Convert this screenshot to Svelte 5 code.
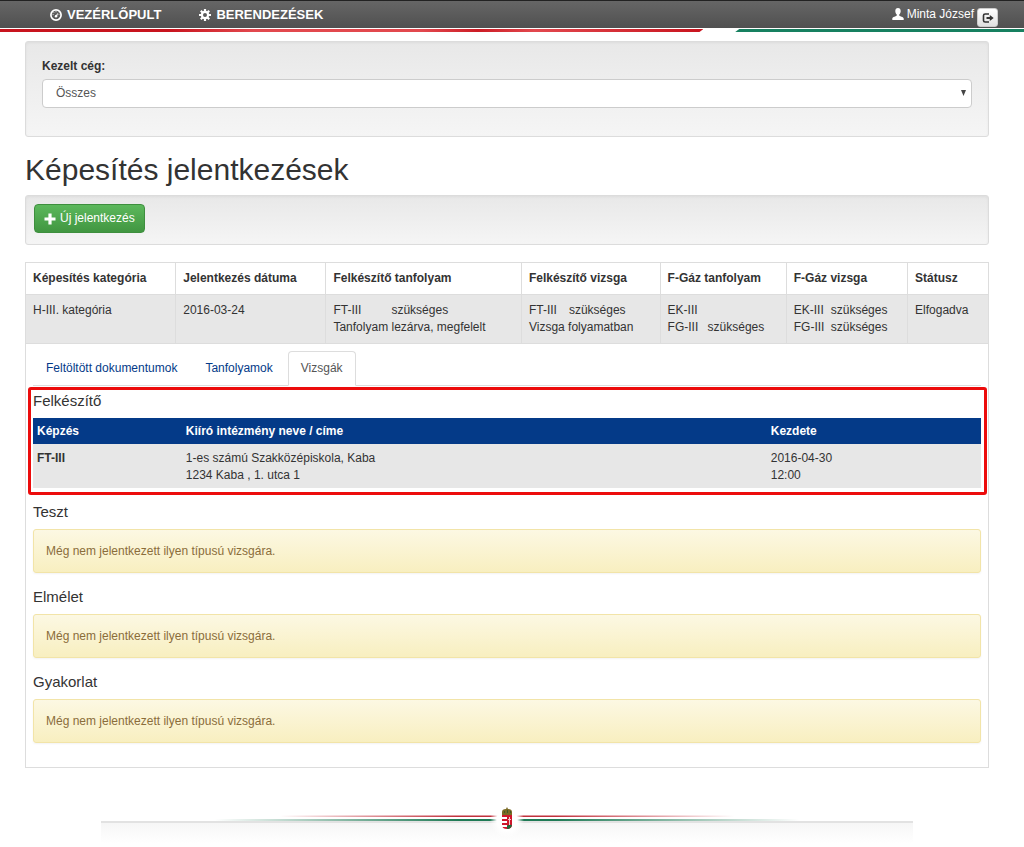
<script>
  let company = 'all';
  let activeTab = 'Vizsgák';

  const tabs = ['Feltöltött dokumentumok', 'Tanfolyamok', 'Vizsgák'];
  const emptyExams = ['Teszt', 'Elmélet', 'Gyakorlat'];

  const exams = [
    {
      training: 'FT-III',
      institution: '1-es számú Szakközépiskola, Kaba',
      address: '1234 Kaba , 1. utca 1',
      date: '2016-04-30',
      time: '12:00'
    }
  ];
</script>

<header>
  <nav>
    <a href="#vezerlopult">
      <svg width="12" height="12" viewBox="0 0 12 12" aria-hidden="true">
        <circle cx="6" cy="6" r="5.1" fill="none" stroke="#fff" stroke-width="1.7" />
        <path d="M5.2 6.9 8.4 3.4 6.9 7.8Z" fill="#fff" />
        <circle cx="6" cy="7.2" r="1.2" fill="#fff" />
        <path d="M2.6 5.6h1M3.7 3.3l.7.7M6 2.2v1M9.4 5.6h-.8" stroke="#fff" stroke-width=".8" />
      </svg>
      VEZÉRLŐPULT
    </a>
    <a href="#berendezesek">
      <svg width="12" height="12" viewBox="0 0 12 12" aria-hidden="true">
        <circle cx="6" cy="6" r="3.1" fill="none" stroke="#fff" stroke-width="2.2" />
        <path d="M6 0v2.4M6 9.6V12M0 6h2.4M9.6 6H12M1.8 1.8l1.7 1.7M8.5 8.5l1.7 1.7M10.2 1.8 8.5 3.5M3.5 8.5l-1.7 1.7" stroke="#fff" stroke-width="2.2" />
      </svg>
      BERENDEZÉSEK
    </a>
  </nav>
  <div class="user">
    <svg width="12" height="12" viewBox="0 0 12 12" aria-hidden="true">
      <path d="M6 0C4.300 0 3.300 1.100 3.300 2.900c0 1.500.6 2.900 1.500 3.700v.9C4.400 8.300.3 8.900.3 10.600V12h11.400v-1.400c0-1.700-4.100-2.300-4.500-3.100v-.9c.9-.8 1.500-2.200 1.500-3.700C8.700 1.100 7.700 0 6 0Z" fill="#fff" />
    </svg>
    <span>Minta József</span>
    <button class="logout" aria-label="Kijelentkezés">
      <svg width="12" height="12" viewBox="0 0 12 12" aria-hidden="true">
        <path d="M7 2H3.200Q1.500 2 1.500 3.600v4.800Q1.500 10 3.200 10H7" fill="none" stroke="#333" stroke-width="1.600" />
        <path d="M4.500 5h3.300V2.900L11.700 6 7.800 9.100V7H4.500Z" fill="#333" />
      </svg>
    </button>
  </div>
</header>
<div class="stripe"><i class="red"></i><i class="green"></i></div>

<main>
  <section class="well filter">
    <label for="company">Kezelt cég:</label>
    <div class="select">
      <select id="company" bind:value={company}>
        <option value="all">Összes</option>
      </select>
      <svg width="5" height="6" viewBox="0 0 5 6" aria-hidden="true"><path d="M0 0h5L2.500 6Z" fill="#444" /></svg>
    </div>
  </section>

  <h1>Képesítés jelentkezések</h1>

  <div class="well toolbar">
    <button class="add">
      <svg width="12" height="12" viewBox="0 0 12 12" aria-hidden="true"><path d="M4.400.5h3.200v3.900h3.900v3.200H7.600v3.900H4.400V7.600H.5V4.400h3.900Z" fill="#fff" /></svg>
      Új jelentkezés
    </button>
  </div>

  <table class="list">
    <colgroup>
      <col class="w-date" /><col class="w-date" /><col class="w-course" /><col class="w-exam" />
      <col class="w-gas-course" /><col class="w-gas-exam" /><col />
    </colgroup>
    <thead>
      <tr>
        <th>Képesítés kategória</th>
        <th>Jelentkezés dátuma</th>
        <th>Felkészítő tanfolyam</th>
        <th>Felkészítő vizsga</th>
        <th>F-Gáz tanfolyam</th>
        <th>F-Gáz vizsga</th>
        <th>Státusz</th>
      </tr>
    </thead>
    <tbody>
      <tr class="active">
        <td>H-III. kategória</td>
        <td>2016-03-24</td>
        <td>
          <div class="pair wide"><span>FT-III</span><span>szükséges</span></div>
          <div>Tanfolyam lezárva, megfelelt</div>
        </td>
        <td>
          <div class="pair"><span>FT-III</span><span>szükséges</span></div>
          <div>Vizsga folyamatban</div>
        </td>
        <td>
          <div>EK-III</div>
          <div class="pair"><span>FG-III</span><span>szükséges</span></div>
        </td>
        <td>
          <div class="pair tight"><span>EK-III</span><span>szükséges</span></div>
          <div class="pair tight"><span>FG-III</span><span>szükséges</span></div>
        </td>
        <td>Elfogadva</td>
      </tr>
      <tr>
        <td colspan="7">
          <div class="details">
            <div class="tabs" role="tablist">
              {#each tabs as tab}
                <button role="tab" aria-selected={activeTab === tab} class:current={activeTab === tab} on:click={() => activeTab = tab}>{tab}</button>
              {/each}
            </div>

            <section class="marked">
              <h2>Felkészítő</h2>
              <table class="exams">
                <colgroup><col class="w-training" /><col class="w-place" /><col /></colgroup>
                <thead>
                  <tr><th>Képzés</th><th>Kiíró intézmény neve / címe</th><th>Kezdete</th></tr>
                </thead>
                <tbody>
                  {#each exams as exam}
                    <tr>
                      <th scope="row">{exam.training}</th>
                      <td>{exam.institution}<br />{exam.address}</td>
                      <td>{exam.date}<br />{exam.time}</td>
                    </tr>
                  {/each}
                </tbody>
              </table>
            </section>

            {#each emptyExams as name}
              <section>
                <h2>{name}</h2>
                <p class="alert">Még nem jelentkezett ilyen típusú vizsgára.</p>
              </section>
            {/each}
          </div>
        </td>
      </tr>
    </tbody>
  </table>
</main>

<footer>
  <svg viewBox="0 0 812 40" aria-hidden="true">
    <defs>
      <linearGradient id="red-fade"><stop offset=".22" stop-color="#c0202c" stop-opacity="0" /><stop offset=".44" stop-color="#c0303c" /><stop offset=".56" stop-color="#c0303c" /><stop offset=".78" stop-color="#c0202c" stop-opacity="0" /></linearGradient>
      <linearGradient id="green-fade"><stop offset=".14" stop-color="#1f7a55" stop-opacity="0" /><stop offset=".44" stop-color="#1f7a55" /><stop offset=".56" stop-color="#1f7a55" /><stop offset=".86" stop-color="#1f7a55" stop-opacity="0" /></linearGradient>
      <linearGradient id="shade" x2="0" y2="1"><stop stop-color="#f6f6f6" /><stop offset="1" stop-color="#fff" /></linearGradient>
      <radialGradient id="glow"><stop offset=".6" stop-color="#fff" /><stop offset="1" stop-color="#fff" stop-opacity="0" /></radialGradient>
    </defs>
    <path d="M0 16h812v20H0Z" fill="url(#shade)" />
    <path d="M0 14h812v2H0Z" fill="#e2e2e2" />
    <path d="M0 8.500h812v1.500H0Z" fill="url(#red-fade)" />
    <path d="M0 12h812v2H0Z" fill="url(#green-fade)" />
    <ellipse cx="406" cy="13" rx="17" ry="18" fill="url(#glow)" />
    <path d="M401 5q0-3 4-3l1-2 1 2q4 0 4 3v3h-10Z" fill="#7a6a24" />
    <path d="M403 4h1v2h-1ZM406 3h1v3h-1ZM409 4h1v2h-1Z" fill="#3f5a2a" />
    <path d="M401 8h10v10q0 4-5 4-5 0-5-4Z" fill="#d0162c" />
    <path d="M401 10h5v2h-5ZM401 14h5v2h-5ZM401 18h5v2h-5Z" fill="#fff" />
    <path d="M406 19q2-2 5-1-1 4-5 4Z" fill="#1e6b3c" />
    <path d="M408 10h1v2h1v1h-1v5h-1v-5h-1v-1h1Z" fill="#f3c9c9" />
  </svg>
</footer>

<style>
  :global(body) {
    margin: 0;
    background: #fff;
    color: #333;
    font: 12px/17px "Liberation Sans", Arial, sans-serif;
  }

  button, select { font: inherit; }

  header {
    display: flex;
    justify-content: space-between;
    box-sizing: border-box;
    height: 28px;
    padding: 0 26px 0 50px;
    border-top: 1px solid #222;
    background: linear-gradient(#666, #505050);
    color: #fff;
  }
  nav { display: flex; align-items: center; gap: 38px; }
  nav a {
    display: flex;
    align-items: center;
    gap: 5px;
    color: #fff;
    font-size: 13px;
    font-weight: bold;
    text-decoration: none;
  }
  .user { display: flex; align-items: center; gap: 3px; padding-bottom: 1px; }
  .logout {
    display: grid;
    place-items: center;
    align-self: flex-end;
    width: 21px;
    height: 19px;
    padding: 0;
    border: 1px solid #ccc;
    border-radius: 3px;
    background: linear-gradient(#fff, #e0e0e0);
  }

  .stripe { display: flex; justify-content: space-between; height: 3px; padding-top: 1px; }
  .red {
    width: 68.7%;
    background: linear-gradient(90deg, #c8141e 24%, #e2484e 36%, #e2484e 60%, #cc1c25 68%, #e2484e 76%, #c8141e);
    clip-path: polygon(0 0, 100% 0, calc(100% - 4px) 100%, 0 100%);
  }
  .green {
    width: 28.2%;
    background: #178060;
    clip-path: polygon(4px 0, 100% 0, 100% 100%, 0 100%);
  }

  main { padding: 9px 35px 0 25px; }
  .well {
    border: 1px solid #dcdcdc;
    border-radius: 3px;
    background: linear-gradient(#e8e8e8, #f5f5f5);
    box-shadow: inset 0 1px 3px rgba(0, 0, 0, .05);
  }
  .filter { padding: 16px 16px 28px; }
  .filter label { display: block; margin-bottom: 4px; font-weight: bold; }
  .select { position: relative; }
  .select select {
    display: block;
    width: 100%;
    height: 29px;
    padding: 0 13px;
    border: 1px solid #ccc;
    border-radius: 4px;
    background: #fff;
    color: #555;
    appearance: none;
  }
  .select svg { position: absolute; top: 11px; right: 6px; pointer-events: none; }

  h1 { margin: 16px 0 8px; font-size: 30px; font-weight: normal; line-height: 34px; }

  .toolbar { padding: 8px 8px 11px; }
  .add {
    display: flex;
    align-items: center;
    gap: 4px;
    height: 29px;
    padding: 0 9px;
    border: 1px solid #3e8f3e;
    border-radius: 4px;
    background: linear-gradient(#5cb85c, #419641);
    color: #fff;
  }

  table { width: 100%; border-collapse: collapse; table-layout: fixed; }
  th, td { text-align: left; vertical-align: top; }
  .list { margin-top: 17px; }
  .list > thead th, .list > tbody > tr > td { padding: 7px; border: 1px solid #ddd; }
  .list > tbody > .active > td { background: #e7e7e7; }
  .w-date { width: 15.6%; }
  .w-course { width: 20.3%; }
  .w-exam { width: 14.4%; }
  .w-gas-course { width: 13.1%; }
  .w-gas-exam { width: 12.6%; }
  .pair { display: grid; grid-template-columns: 40px 1fr; }
  .pair.wide { grid-template-columns: 58px 1fr; }
  .pair.tight { grid-template-columns: 37px 1fr; }

  .tabs { display: flex; gap: 2px; border-bottom: 1px solid #ddd; }
  .tabs button {
    height: 35px;
    margin-bottom: -1px;
    padding: 0 12px;
    border: 1px solid transparent;
    border-radius: 4px 4px 0 0;
    background: none;
    color: #043a88;
  }
  .tabs .current { border-color: #ddd #ddd #fff; background: #fff; color: #555; }

  .details section { margin-bottom: 15px; }
  .details section:last-child { margin-bottom: 17px; }
  h2 { margin: 0 0 9px; font-size: 15px; font-weight: normal; line-height: 17px; }
  .details .marked { position: relative; margin: 6px 0 15px; }
  /* highlight frame round the current exam */
  .marked::after {
    content: '';
    position: absolute;
    inset: -5px -6px -7px -5px;
    border: 3px solid #ec0c0c;
    border-radius: 3px;
    pointer-events: none;
  }
  .w-training { width: 15.7%; }
  .w-place { width: 61.7%; }
  .exams th, .exams td { padding: 6px 4px 4px; }
  .exams thead th { padding: 5px 4px 4px; background: #043a88; color: #fff; }
  .exams tbody { background: #e7e7e7; }
  .alert {
    margin: 0;
    padding: 13px 12px 12px;
    border: 1px solid #f2e4a8;
    border-radius: 3px;
    background: linear-gradient(#fcf8e3, #f8efc0);
    box-shadow: 0 1px 2px rgba(0, 0, 0, .05);
    color: #8a6d3b;
  }

  footer { padding: 39px 35px 0 25px; }
  footer svg { display: block; width: 100%; max-width: 812px; margin: 0 auto; }
</style>
